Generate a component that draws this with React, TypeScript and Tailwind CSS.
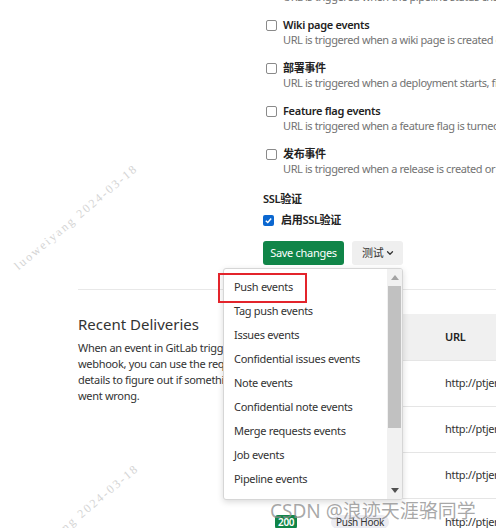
import { ChevronDown } from "lucide-react";

const events = [
  { label: "Pipeline events", desc: "URL is triggered when the pipeline status changes" },
  { label: "Wiki page events", desc: "URL is triggered when a wiki page is created or updated" },
  { label: "部署事件", desc: "URL is triggered when a deployment starts, finishes, fails, or is canceled" },
  { label: "Feature flag events", desc: "URL is triggered when a feature flag is turned on or off" },
  { label: "发布事件", desc: "URL is triggered when a release is created or updated" },
];

const menu = [
  "Push events",
  "Tag push events",
  "Issues events",
  "Confidential issues events",
  "Note events",
  "Confidential note events",
  "Merge requests events",
  "Job events",
  "Pipeline events",
  "Wiki page events",
  "Releases events",
];

const url = "http://ptjenkins.example.com/project/build";

function DeliveryRow({ last }: { last?: boolean }) {
  return (
    <div className={`grid h-[46px] grid-cols-[60px_110px_1fr] items-center text-[#333] ${last ? "" : "border-b border-[#e5e5e5]"}`}>
      <div className="pl-[12px]">
        <span className="rounded-[3px] bg-[#108548] px-[3px] text-[10px] font-semibold text-white">200</span>
      </div>
      <div className="pl-[8px]">
        <span className="rounded-[8px] bg-[#ececf2] px-[5px] text-[10px] text-[#333]">Push Hook</span>
      </div>
      <div className="pl-[12px]">{url}</div>
    </div>
  );
}

export default function App() {
  return (
    <div className="relative h-[528px] w-[496px] overflow-hidden bg-white font-['Noto_Sans','Noto_Sans_CJK_SC',sans-serif] text-[11px] tracking-[-0.3px] text-[#333]">
      {/* webhook form */}
      <div className="ml-[78px] mt-[-26px] grid grid-cols-[185px_1fr]">
        <div />
        <div>
          <div className="pl-[3px]">
            {events.map((e) => (
              <div key={e.label} className="mb-[12px] flex gap-[6px]">
                <span className="mt-[3px] h-[11px] w-[11px] shrink-0 rounded-[2px] border border-[#8a8a8a] bg-white" />
                <div className="whitespace-nowrap">
                  <div className="h-[15px] font-semibold leading-[15px] text-[#222]">{e.label}</div>
                  <div className="h-[16px] leading-[16px] tracking-[-0.4px] text-[#737373]">{e.desc}</div>
                </div>
              </div>
            ))}
          </div>
          <div className="h-[20px] font-semibold leading-[20px] text-[#222]">SSL验证</div>
          <label className="mt-[3px] flex h-[16px] items-center gap-[7px]">
            <span className="flex h-[11px] w-[11px] items-center justify-center rounded-[2px] bg-[#0b67d0]">
              <svg width="9" height="9" viewBox="0 0 10 10">
                <path d="M2 5.2 4.2 7.3 8 2.8" fill="none" stroke="white" strokeWidth="1.6" />
              </svg>
            </span>
            <span className="font-semibold text-[#222]">启用SSL验证</span>
          </label>
          <div className="mt-[13px] flex gap-[8px]">
            <button className="h-[24px] w-[81px] rounded-[3px] bg-[#108548] text-[11px] text-white">Save changes</button>
            <button className="flex h-[24px] w-[51px] items-center gap-[2px] rounded-[3px] bg-[#efefef] pl-[10px] text-[11px] text-[#333]">
              测试
              <ChevronDown size={10} strokeWidth={3} />
            </button>
          </div>
        </div>
      </div>

      <div className="ml-[78px] mt-[24px] border-t border-[#e8e8e8]" />

      {/* recent deliveries */}
      <div className="ml-[78px] grid grid-cols-[185px_1fr] pt-[24px]">
        <div className="pr-[10px]">
          <h2 className="text-[15px] leading-[20px] tracking-normal text-[#333]">Recent Deliveries</h2>
          <p className="mt-[6px] leading-[16px] text-[#333]">
            When an event in GitLab triggers a webhook, you can use the request details to figure out if something went wrong.
          </p>
        </div>
        <div className="whitespace-nowrap">
          <div className="grid h-[47px] grid-cols-[60px_110px_1fr] items-center border-b border-[#e5e5e5] bg-[#f0f0f0] font-semibold text-[#222]">
            <div className="pl-[12px]">Status</div>
            <div className="pl-[8px]">Trigger</div>
            <div className="pl-[12px]">URL</div>
          </div>
          <DeliveryRow />
          <DeliveryRow />
          <DeliveryRow />
          <DeliveryRow last />
        </div>
      </div>

      {/* test dropdown */}
      <div className="absolute left-[223px] top-[268px] flex h-[232px] w-[180px] overflow-hidden rounded-[3px] border border-[#d6d6d6] bg-white shadow-[0_2px_6px_rgba(0,0,0,0.15)]">
        <ul className="flex-1 pl-[10px] pt-[6px]">
          {menu.map((m) => (
            <li key={m} className="h-[24px] whitespace-nowrap leading-[24px] text-[#333]">
              {m}
            </li>
          ))}
        </ul>
        <div className="flex w-[15px] flex-col bg-[#f1f1f1]">
          <div className="flex h-[17px] items-center justify-center">
            <svg width="8" height="5" viewBox="0 0 8 5">
              <polygon points="0,5 8,5 4,0" fill="#a3a3a3" />
            </svg>
          </div>
          <div className="mx-[1px] h-[142px] bg-[#c1c1c1]" />
          <div className="flex-1" />
          <div className="flex h-[17px] items-center justify-center">
            <svg width="8" height="5" viewBox="0 0 8 5">
              <polygon points="0,0 8,0 4,5" fill="#505050" />
            </svg>
          </div>
        </div>
      </div>

      {/* annotation box */}
      <div className="absolute left-[218px] top-[273px] h-[30px] w-[89px] border-2 border-[#e3242b]" />

      {/* watermarks */}
      <div className="pointer-events-none absolute left-[76px] top-[217px] -translate-x-1/2 -translate-y-1/2 -rotate-[40deg] whitespace-nowrap font-['Liberation_Serif',serif] text-[12px] tracking-[2px] text-[#d4d4d4]">
        luoweiyang 2024-03-18
      </div>
      <div className="pointer-events-none absolute left-[77px] top-[517px] -translate-x-1/2 -translate-y-1/2 -rotate-[40deg] whitespace-nowrap font-['Liberation_Serif',serif] text-[12px] tracking-[2px] text-[#d4d4d4]">
        luoweiyang 2024-03-18
      </div>
      <div className="pointer-events-none absolute left-[270px] top-[497px] whitespace-nowrap font-['Noto_Sans','Noto_Sans_CJK_SC',sans-serif] text-[19px] tracking-normal text-[#8c8c8c]/75">
        CSDN @浪迹天涯骆同学
      </div>
    </div>
  );
}
